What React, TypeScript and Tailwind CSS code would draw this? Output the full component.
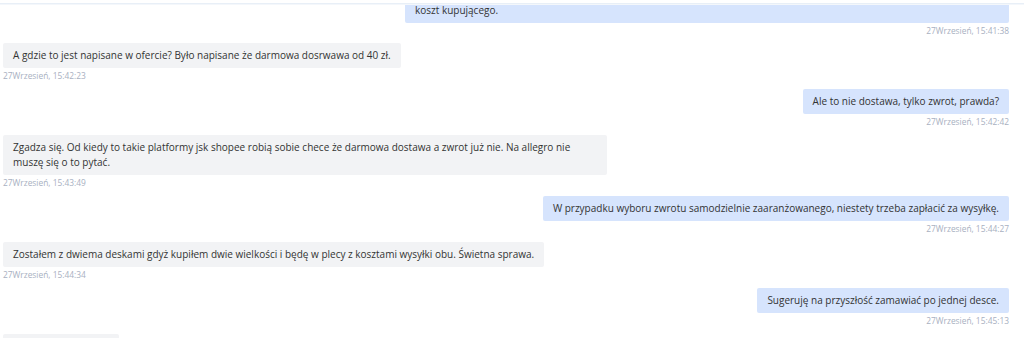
type Msg = {
  side: 'left' | 'right';
  lines: string[];
  time: string;
};

const MESSAGES: Msg[] = [
  {
    side: 'right',
    lines: [
      'W przypadku zwrotu samodzielnie zaaranżowanego koszty przesyłki zwrotnej nie są pokrywane przez sklep i pozostają na',
      'koszt kupującego.',
    ],
    time: '27Wrzesień, 15:41:38',
  },
  {
    side: 'left',
    lines: ['A gdzie to jest napisane w ofercie? Było napisane że darmowa dosrwawa od 40 zł.'],
    time: '27Wrzesień, 15:42:23',
  },
  {
    side: 'right',
    lines: ['Ale to nie dostawa, tylko zwrot, prawda?'],
    time: '27Wrzesień, 15:42:42',
  },
  {
    side: 'left',
    lines: [
      'Zgadza się. Od kiedy to takie platformy jsk shopee robią sobie chece że darmowa dostawa a zwrot już nie. Na allegro nie',
      'muszę się o to pytać.',
    ],
    time: '27Wrzesień, 15:43:49',
  },
  {
    side: 'right',
    lines: ['W przypadku wyboru zwrotu samodzielnie zaaranżowanego, niestety trzeba zapłacić za wysyłkę.'],
    time: '27Wrzesień, 15:44:27',
  },
  {
    side: 'left',
    lines: ['Zostałem z dwiema deskami gdyż kupiłem dwie wielkości i będę w plecy z kosztami wysyłki obu. Świetna sprawa.'],
    time: '27Wrzesień, 15:44:34',
  },
  {
    side: 'right',
    lines: ['Sugeruję na przyszłość zamawiać po jednej desce.'],
    time: '27Wrzesień, 15:45:13',
  },
  {
    side: 'left',
    lines: ['Rozumiem, dziękuję.'],
    time: '27Wrzesień, 15:45:40',
  },
];

function clsx(...parts: (string | false | undefined)[]) {
  return parts.filter(Boolean).join(' ');
}

const Bubble = ({ msg }: { msg: Msg }) => {
  const mine = msg.side === 'right';
  const multi = msg.lines.length > 1;
  return (
    <div className={mine ? 'mb-[7px] flex flex-col items-end' : 'mb-[7px] flex flex-col items-start'}>
      <div
        className={clsx(
          'whitespace-nowrap rounded-[2px] px-[10px] py-[5px] text-[10px] leading-[15px] text-[#333333]',
          mine ? 'bg-[#d6e4fd]' : 'bg-[#f2f3f5]',
          multi && 'w-[604px]'
        )}
      >
        {msg.lines.map((line, i) => (
          <div key={i}>{line}</div>
        ))}
      </div>
      <div className="mt-[1px] text-[8.4px] leading-[13px] text-[#a8b0c1]">{msg.time}</div>
    </div>
  );
};

export default function App() {
  return (
    <div
      className="flex h-[338px] w-[1024px] flex-col overflow-hidden bg-white"
      style={{ fontFamily: '"Open Sans", "Noto Sans", sans-serif' }}
    >
      <div className="mt-[3px] h-[1px] bg-[#e8eff7]" />
      <div className="h-[1px] bg-[#f4f7fb]" />
      <div className="flex-1 overflow-hidden pl-[3px] pr-[15px]">
        <div className="-mt-[22px]">
          {MESSAGES.map((m, i) => (
            <div key={i} className={i === 0 ? '-mb-[1px]' : undefined}>
              <Bubble msg={m} />
            </div>
          ))}
        </div>
      </div>
    </div>
  );
}
